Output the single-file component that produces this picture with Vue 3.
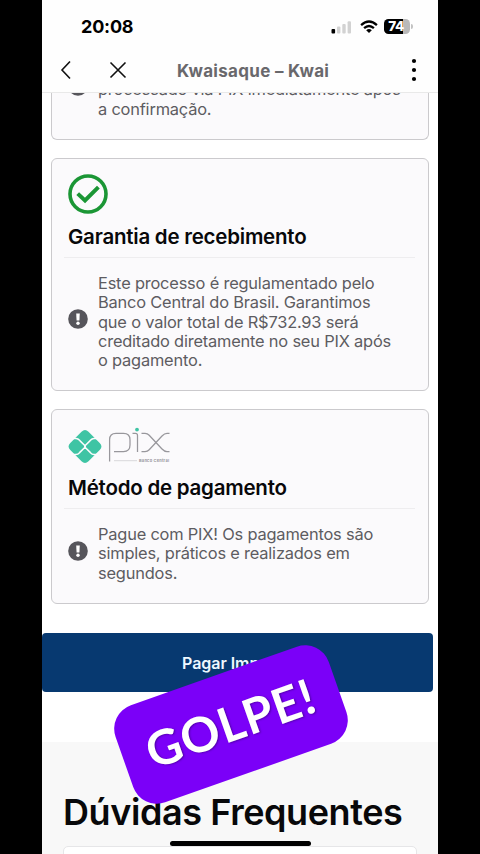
<script setup>
const cards = [
  {
    id: 'garantia',
    icon: 'check',
    title: 'Garantia de recebimento',
    lines: [
      'Este processo é regulamentado pelo',
      'Banco Central do Brasil. Garantimos',
      'que o valor total de R$732.93 será',
      'creditado diretamente no seu PIX após',
      'o pagamento.',
    ],
  },
  {
    id: 'metodo',
    icon: 'pix',
    title: 'Método de pagamento',
    lines: [
      'Pague com PIX! Os pagamentos são',
      'simples, práticos e realizados em',
      'segundos.',
    ],
  },
]
</script>

<template>
  <div class="stage">
    <div class="phone">
      <header class="top">
        <div class="status">
          <span class="time">20:08</span>
          <div class="indicators">
            <svg class="signal" width="21" height="14" viewBox="0 0 21 14">
              <rect x="0.5" y="9" width="3.6" height="4.5" rx="1" fill="#000" />
              <rect x="6" y="6.6" width="3.4" height="6.9" rx="1" fill="#d2d2d2" />
              <rect x="11.3" y="4" width="3.4" height="9.5" rx="1" fill="#d2d2d2" />
              <rect x="16.6" y="1.2" width="3.4" height="12.3" rx="1" fill="#d2d2d2" />
            </svg>
            <svg class="wifi" width="18" height="14" viewBox="0 0 18 14">
              <g fill="none" stroke="#000" stroke-width="2.3">
                <path d="M1.1 5.1Q9 -2 16.9 5.1" />
                <path d="M4.1 8.2Q9 3.8 13.9 8.2" />
              </g>
              <path d="M6.2 10.2Q9 8 11.8 10.2L9 13Z" fill="#000" />
            </svg>
            <div class="battery"><span>74</span></div>
            <i class="cap"></i>
          </div>
        </div>
        <div class="nav">
          <svg class="back" width="12" height="20" viewBox="0 0 12 20">
            <path d="M10 1.5L2 10L10 18.5" fill="none" stroke="#111" stroke-width="1.6" />
          </svg>
          <svg class="close" width="18" height="18" viewBox="0 0 18 18">
            <path d="M1.5 1.5L16.5 16.5M16.5 1.5L1.5 16.5" fill="none" stroke="#111" stroke-width="1.6" />
          </svg>
          <span class="site">Kwaisaque – Kwai</span>
          <svg class="more" width="6" height="24" viewBox="0 0 6 24">
            <circle cx="3" cy="3" r="2.1" /><circle cx="3" cy="12" r="2.1" /><circle cx="3" cy="21" r="2.1" />
          </svg>
        </div>
      </header>

      <main class="page">
        <section class="card clipped">
          <div class="note">
            <svg class="alert" width="20" height="20" viewBox="0 0 20 20">
              <circle cx="10" cy="10" r="9.8" fill="#56555b" />
            </svg>
            <p>
              <span class="wide">processado via PIX imediatamente após</span>
              <span>a confirmação.</span>
            </p>
          </div>
        </section>

        <section v-for="card in cards" :key="card.id" class="card" :class="card.id">
          <div class="emblem">
            <svg v-if="card.icon === 'check'" width="40" height="40" viewBox="0 0 40 40">
              <circle cx="20" cy="20" r="18" fill="none" stroke="#1b9635" stroke-width="3.6" />
              <path d="M9.7 19.6L17 26.4L30.4 13.2" fill="none" stroke="#1b9635" stroke-width="4" />
            </svg>
            <svg v-else width="104" height="38" viewBox="0 0 104 38">
              <path d="M13.5 4.8Q17 1.3 20.5 4.8L31.7 16Q35.2 19.5 31.7 23L20.5 34.2Q17 37.7 13.5 34.2L2.3 23Q-1.2 19.5 2.3 16Z" fill="#3fc4a4" />
              <g fill="none" stroke="#fcfbfd" stroke-width="1.5">
                <path d="M4 11.5H8C10.5 11.5 11 12.8 12.3 14.1L17 18.8L21.7 14.1C23 12.8 23.5 11.5 26 11.5H30" />
                <path d="M4 27.5H8C10.5 27.5 11 26.2 12.3 24.9L17 20.2L21.7 24.9C23 26.2 23.5 27.5 26 27.5H30" />
                <path d="M16 19.5H18" />
              </g>
              <g fill="none" stroke="#98979c" stroke-width="1.25">
                <path d="M41.6 34.5V12.5Q41.6 6.4 48 6.4H55.5Q62 6.4 62 12.8V18Q62 24.6 55.5 24.6H46" />
                <path d="M64.5 6.4H67.5Q69.5 6.4 69.5 8.5V25" />
                <path d="M73.5 6.4H77Q79.5 6.4 81.2 8.2L94 22Q96.5 24.6 99 24.6H101.5" />
                <path d="M101.5 6.4H99Q96.5 6.4 94 9L81.2 22.8Q79.5 24.6 77 24.6H73.5" />
              </g>
              <circle cx="69" cy="2.6" r="1.9" fill="#3fc4a4" />
              <path d="M46 33.7H69" stroke="#d8d8da" stroke-width="1" />
              <text x="71" y="34.5" class="tiny" textLength="30">Banco Central</text>
            </svg>
          </div>
          <h2>{{ card.title }}</h2>
          <div class="note">
            <svg class="alert" width="20" height="20" viewBox="0 0 20 20">
              <circle cx="10" cy="10" r="9.8" fill="#56555b" />
              <path d="M8.2 4.5h3.6l-.4 7H8.6Z" fill="#fff" /><circle cx="10" cy="14.2" r="1.7" fill="#fff" />
            </svg>
            <p><span v-for="line in card.lines" :key="line">{{ line }}</span></p>
          </div>
        </section>

        <button class="pay">Pagar Imposto</button>

        <section class="faq">
          <h1>Dúvidas Frequentes</h1>
          <div class="question"></div>
        </section>
      </main>
      <div class="home"></div>
    </div>
    <div class="sticker"><span>GOLPE!</span></div>
  </div>
</template>

<style>
body { margin: 0; background: #000; }
</style>

<style scoped>
* { box-sizing: border-box; }
.stage {
  position: relative;
  width: 480px;
  height: 854px;
  padding: 0 42px;
  background: #000;
  overflow: hidden;
  font-family: Inter, "Liberation Sans", sans-serif;
}
.phone {
  position: relative;
  display: flex;
  flex-direction: column;
  width: 396px;
  height: 854px;
  background: #fff;
  overflow: hidden;
}
.top {
  flex: none;
  height: 93px;
  background: #fefefe;
  border-bottom: 1px solid #e9e9e9;
}
.status {
  display: flex;
  justify-content: space-between;
  align-items: center;
  height: 52px;
  padding: 1px 25px 0 39px;
}
.time { font-size: 18px; font-weight: 700; line-height: 22px; letter-spacing: -0.2px; }
.indicators { display: flex; align-items: center; }
.wifi { margin-left: 8px; }
.battery {
  width: 26px;
  height: 15px;
  margin-left: 6px;
  padding-right: 2px;
  border-radius: 4.5px;
  background: linear-gradient(90deg, #000 0 19px, #b9b9b9 19px);
  color: #fff;
  font-size: 13.5px;
  font-weight: 800;
  line-height: 15px;
  text-align: center;
  letter-spacing: -0.5px;
}
.cap { width: 2px; height: 5px; margin-left: 1px; border-radius: 0 2px 2px 0; background: #c2c2c2; }
.nav {
  display: flex;
  align-items: center;
  height: 36px;
  padding: 0 21px 0 18px;
}
.close { margin-left: 37px; }
.site {
  margin-left: 50px;
  padding-top: 1px;
  color: #69686c;
  font-size: 17px;
  font-weight: 700;
  line-height: 22px;
  letter-spacing: 0.3px;
  white-space: nowrap;
}
.more { margin-left: auto; }
.page {
  display: flex;
  flex-direction: column;
  flex: 1;
  min-height: 0;
  overflow: hidden;
}
.card {
  flex: none;
  width: 378px;
  margin: 0 0 18px 9px;
  padding: 15px 13px 0 16px;
  border: 1.5px solid #cbcacd;
  border-radius: 6px;
  background: #fbfafc;
}
.clipped {
  display: flex;
  align-items: flex-end;
  height: 47px;
  padding-top: 0;
  padding-bottom: 20px;
  border-top: 0;
  border-radius: 0 0 6px 6px;
  overflow: hidden;
}
.clipped .note { align-items: flex-start; }
.clipped .alert { margin-top: -4px; }
.garantia { height: 233px; }
.metodo { height: 195px; }
.emblem { height: 40px; }
.emblem svg { display: block; }
.metodo .emblem { padding-top: 2px; }
.tiny { fill: #98979c; font-size: 4px; font-weight: 700; }
h2 {
  margin: 0 0 0 -4px;
  padding: 8px 0 0 4px;
  height: 44px;
  border-bottom: 1px solid #eeedef;
  color: #08080a;
  font-size: 20.5px;
  font-weight: 600;
  line-height: 29px;
  letter-spacing: -0.23px;
  white-space: nowrap;
}
.note { display: flex; align-items: center; gap: 10px; }
.card h2 + .note { margin-top: 16px; }
h2 + .note .alert { margin-bottom: 6px; }
.alert { flex: none; }
p {
  display: flex;
  flex-direction: column;
  margin: 0;
  color: #5d5c61;
  font-size: 16.4px;
  line-height: 19.3px;
  letter-spacing: -0.19px;
  white-space: nowrap;
}
.pay {
  flex: none;
  width: 391px;
  height: 59px;
  margin-top: 11px;
  padding: 0;
  border: 0;
  border-radius: 4px;
  background: #073970;
  color: #eef8ff;
  font-family: inherit;
  font-size: 16px;
  font-weight: 600;
  letter-spacing: -0.05px;
}
.faq {
  flex: none;
  width: 396px;
  height: 160px;
  margin-top: 50px;
  padding: 47.5px 21px 0;
  background: #f8f8f8;
}
h1 {
  margin: 0;
  color: #08080a;
  font-size: 36px;
  font-weight: 600;
  line-height: 44px;
  letter-spacing: -0.42px;
  white-space: nowrap;
}
.question {
  height: 60px;
  margin-top: 12.5px;
  border: 1.5px solid #e6e6e8;
  border-radius: 5px;
  background: #fff;
}
.home {
  position: absolute;
  left: 128px;
  top: 841px;
  width: 141px;
  height: 5px;
  border-radius: 3px;
  background: #000;
}
.sticker {
  position: absolute;
  left: 118px;
  top: 672.5px;
  display: flex;
  align-items: center;
  justify-content: center;
  width: 226px;
  height: 103px;
  padding-bottom: 5px;
  border-radius: 25px;
  background: #7b00f8;
  color: #fff;
  font-family: Lato, sans-serif;
  font-size: 48.5px;
  font-weight: 700;
  letter-spacing: 0.9px;
  transform: rotate(-19.4deg);
}
.sticker span { text-shadow: 1px 1px 2px rgba(40, 0, 90, 0.5); }
</style>
